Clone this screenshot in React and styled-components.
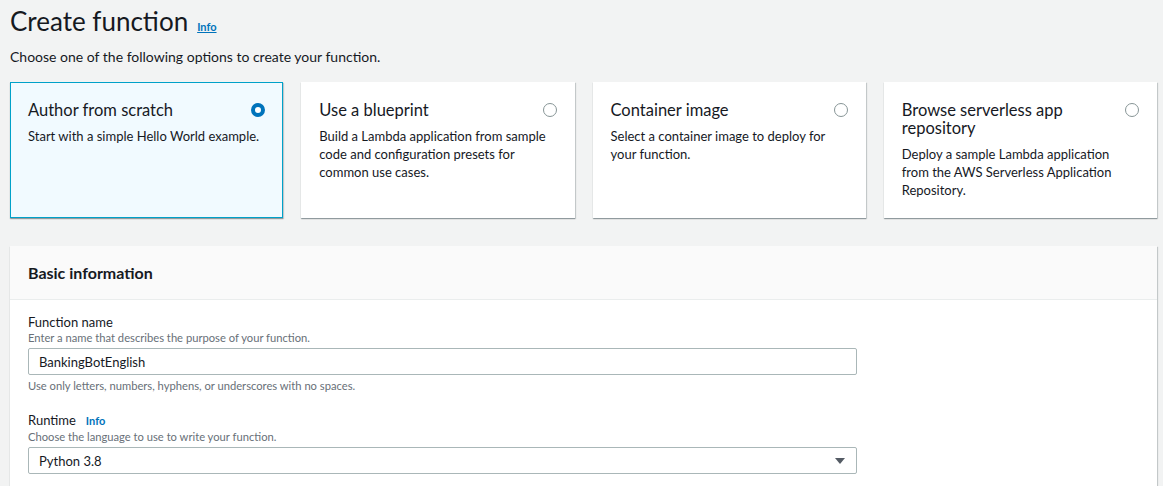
import styled, { createGlobalStyle } from 'styled-components';

const GlobalStyle = createGlobalStyle`
    body {
        margin: 0;
        background: #f2f3f3;
        font-family: Lato, "Open Sans", sans-serif;
        color: #16191f;
    }
`;

const Page = styled.div`
    padding: 0 6px 0 10px;
`;

const Header = styled.div`
    display: flex;
    align-items: baseline;
    gap: 9px;
    padding-top: 4px;
`;

const Title = styled.h1`
    margin: 0;
    font-size: 26px;
    font-weight: 400;
    line-height: 34px;
`;

const InfoLink = styled.a`
    color: #0073bb;
    font-size: 11px;
    font-weight: 700;
    text-decoration: ${(p) => (p.underline ? 'underline' : 'none')};
    cursor: pointer;
`;

const Lead = styled.p`
    margin: 9px 0 15px;
    font-size: 14px;
    line-height: 20px;
`;

const CardGrid = styled.div`
    display: grid;
    grid-template-columns: repeat(4, 1fr);
    gap: 18px;
`;

const Card = styled.label`
    display: flex;
    flex-direction: column;
    gap: 8px;
    height: 136px;
    box-sizing: border-box;
    padding: 18px 17px 17px;
    background: ${(p) => (p.selected ? '#f1faff' : '#ffffff')};
    border: 1px solid ${(p) => (p.selected ? '#00a1c9' : 'transparent')};
    box-shadow: 0 1px 1px 0 rgba(0, 28, 36, 0.3), 1px 1px 1px 0 rgba(0, 28, 36, 0.15);
    cursor: pointer;
`;

const CardHead = styled.div`
    display: flex;
    justify-content: space-between;
    gap: 16px;
`;

const CardTitle = styled.div`
    font-size: 16.5px;
    line-height: 18px;
`;

const CardText = styled.div`
    font-size: 13px;
    line-height: 18px;
`;

const Radio = styled.span`
    flex: none;
    width: 14px;
    height: 14px;
    margin-top: 2px;
    box-sizing: border-box;
    border-radius: 50%;
    border: ${(p) => (p.checked ? '4px solid #0073bb' : '1px solid #879596')};
    background: #fff;
`;

const Panel = styled.section`
    margin-top: 28px;
    background: #fff;
    box-shadow: 0 1px 1px 0 rgba(0, 28, 36, 0.3), 1px 1px 1px 0 rgba(0, 28, 36, 0.15);
`;

const PanelHeader = styled.div`
    background: #fafafa;
    border-bottom: 1px solid #eaeded;
    padding: 16px 18px;
    height: 54px;
    box-sizing: border-box;
`;

const PanelTitle = styled.h2`
    margin: 0;
    font-size: 16px;
    font-weight: 700;
    line-height: 22px;
`;

const PanelBody = styled.div`
    padding: 13px 18px 20px;
`;

const Field = styled.div`
    margin-bottom: 18px;
`;

const Label = styled.div`
    display: flex;
    align-items: baseline;
    gap: 10px;
    font-size: 13px;
    line-height: 18px;
`;

const Hint = styled.div`
    font-size: 11.2px;
    line-height: 14px;
    color: #687078;
    margin-top: ${(p) => p.top || 0}px;
`;

const Control = styled.div`
    display: flex;
    align-items: center;
    justify-content: space-between;
    width: 829px;
    height: 27px;
    box-sizing: border-box;
    margin-top: 3px;
    padding: 0 10px;
    border: 1px solid #aab7b8;
    border-radius: 2px;
    background: #fff;
    font-size: 13px;
`;

const options = [
    { title: 'Author from scratch', text: 'Start with a simple Hello World example.', selected: true },
    { title: 'Use a blueprint', text: 'Build a Lambda application from sample code and configuration presets for common use cases.' },
    { title: 'Container image', text: 'Select a container image to deploy for your function.' },
    { title: 'Browse serverless app repository', text: 'Deploy a sample Lambda application from the AWS Serverless Application Repository.' },
];

export default function App() {
    return (
        <Page>
            <GlobalStyle />
            <Header>
                <Title>Create function</Title>
                <InfoLink underline>Info</InfoLink>
            </Header>
            <Lead>Choose one of the following options to create your function.</Lead>
            <CardGrid>
                {options.map((o) => (
                    <Card key={o.title} selected={o.selected}>
                        <CardHead>
                            <CardTitle>{o.title}</CardTitle>
                            <Radio checked={o.selected} />
                        </CardHead>
                        <CardText>{o.text}</CardText>
                    </Card>
                ))}
            </CardGrid>
            <Panel>
                <PanelHeader>
                    <PanelTitle>Basic information</PanelTitle>
                </PanelHeader>
                <PanelBody>
                    <Field>
                        <Label>Function name</Label>
                        <Hint>Enter a name that describes the purpose of your function.</Hint>
                        <Control>BankingBotEnglish</Control>
                        <Hint top={4}>Use only letters, numbers, hyphens, or underscores with no spaces.</Hint>
                    </Field>
                    <Field>
                        <Label>
                            Runtime <InfoLink>Info</InfoLink>
                        </Label>
                        <Hint>Choose the language to use to write your function.</Hint>
                        <Control>
                            Python 3.8
                            <svg width="12" height="8" viewBox="0 0 12 8">
                                <path d="M1 1h10L6 7z" fill="#545b64" />
                            </svg>
                        </Control>
                    </Field>
                </PanelBody>
            </Panel>
        </Page>
    );
}
